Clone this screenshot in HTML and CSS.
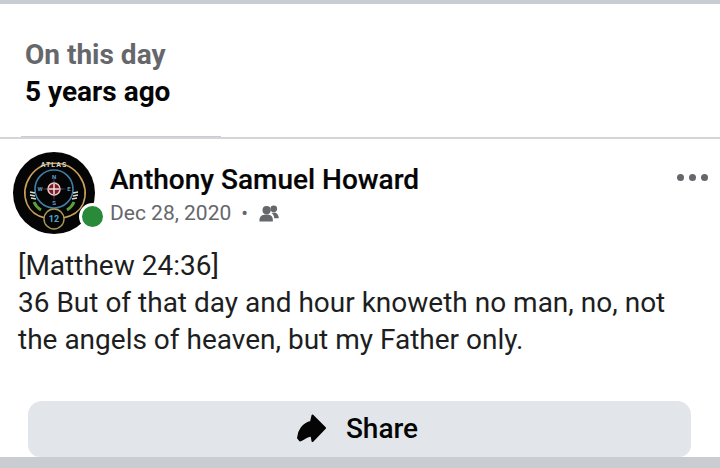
FILE: index.html
```html
<!DOCTYPE html>
<html lang="en">
<head>
  <meta charset="UTF-8">
  <meta name="viewport" content="width=device-width, initial-scale=1.0">
  <title>On this day</title>
  <link rel="stylesheet" href="styles.css">
</head>
<body>
  <div class="memory-header">
    <div class="memory-label">On this day</div>
    <div class="memory-years">5 years ago</div>
    <div class="memory-tab"></div>
  </div>

  <div class="post">
    <div class="post-top">
      <div class="avatar">
        <svg width="82" height="82" viewBox="0 0 82 82">
          <circle cx="41" cy="41" r="41" fill="#050505"/>
          <path d="M14 52A30 30 0 1 1 70 52" fill="none" stroke="#c9a05c" stroke-width="1.600"/>
          <path d="M14 52Q19 63 32 66M70 52Q65 63 50 66" fill="none" stroke="#c9a05c" stroke-width="1.600"/>
          <circle cx="41" cy="37" r="19" fill="#050505" stroke="#3f7fa6" stroke-width="1.600"/>
          <path d="M17 40L22 41M17 43L22 44M18 46L23 47M65 40L60 41M65 43L60 44M64 46L59 47" stroke="#d8dcd0" stroke-width="1.500"/>
          <path d="M21 50Q23 55 28 58M61 50Q59 55 54 58" fill="none" stroke="#5f9e3a" stroke-width="3"/>
          <path d="M41 24L43 35L54 37L43 39L41 50L39 39L28 37L39 35Z" fill="#3a2a30"/>
          <circle cx="41" cy="37" r="6" fill="#7a1a24" stroke="#e8c8c8" stroke-width="1.500"/>
          <path d="M36 37H46M41 32V42" stroke="#f0e0e0" stroke-width="1.500"/>
          <circle cx="41" cy="67" r="10" fill="#050505" stroke="#a89a58" stroke-width="1.400"/>
          <text class="avatar-num" x="41" y="70" text-anchor="middle">12</text>
          <text class="avatar-title" x="41" y="15" text-anchor="middle">ATLAS</text>
          <text class="avatar-dir" x="41" y="27" text-anchor="middle">N</text>
          <text class="avatar-dir" x="41" y="53" text-anchor="middle">S</text>
          <text class="avatar-dir" x="27" y="39" text-anchor="middle">W</text>
          <text class="avatar-dir" x="56" y="39" text-anchor="middle">E</text>
        </svg>
        <span class="online-dot"></span>
      </div>
      <div class="post-meta">
        <div class="post-author">Anthony Samuel Howard</div>
        <div class="post-date">
          <span>Dec 28, 2020</span>
          <span class="sep">•</span>
          <svg width="20" height="18" viewBox="0 0 21 18" fill="#65676b">
            <circle cx="8" cy="6" r="4.300"/>
            <circle cx="15.500" cy="4.500" r="3.500"/>
            <path d="M0.500 17.800C0 12.500 3 10.500 8 10.500C13 10.500 15 13 14.500 17.800Z"/>
            <path d="M13 9C16 7.500 20.500 8.500 20.800 14.500H16C15.800 12 15 10.500 13 9Z"/>
          </svg>
        </div>
      </div>
      <div class="post-more"><i></i><i></i><i></i></div>
    </div>

    <div class="post-text">[Matthew 24:36]<br>36 But of that day and hour knoweth no man, no, not<br>the angels of heaven, but my Father only.</div>

    <div class="share-wrap">
      <button class="share-btn">
        <svg width="30" height="29" viewBox="0 0 30 29" fill="#050505" stroke="#050505" stroke-width="2" stroke-linejoin="round">
          <path d="M15.500 1.500L28 14L15.500 27L14.500 21.500C10 21.500 6 26 3 26.500L1 24C1.500 17 6 9.500 14 8Z"/>
        </svg>
        <span>Share</span>
      </button>
    </div>
  </div>

  <div class="footer-bar"></div>
</body>
</html>
```

FILE: styles.css
```css
html, body {
  height: 100%;
}

body {
  margin: 0;
  font-family: Roboto, "Liberation Sans", sans-serif;
  color: #050505;
  background-color: #fff;
  display: flex;
  flex-direction: column;
  overflow: hidden;
}

/* memory header */
.memory-header {
  position: relative;
  height: 140px;
  padding: 33px 25px 0;
  box-sizing: border-box;
  border-top: 4px solid #c9ccd1;
  border-bottom: 2px solid #d3d5d8;
}

.memory-label {
  font-size: 28px;
  line-height: 36px;
  font-weight: 700;
  color: #65676b;
}

.memory-years {
  font-size: 28px;
  line-height: 36px;
  font-weight: 700;
  margin-top: 1px;
}

.memory-tab {
  position: absolute;
  left: 21px;
  bottom: 0;
  width: 200px;
  height: 1px;
  background-color: #c9ccd1;
}

/* post */
.post {
  flex: 1;
}

.post-top {
  display: flex;
  padding: 13px 12px 0 13px;
}

.avatar {
  position: relative;
  width: 82px;
  height: 82px;
  flex-shrink: 0;
}

.avatar svg {
  display: block;
}

.avatar-title {
  font: 700 7px Roboto, sans-serif;
  letter-spacing: 1px;
  fill: #d8d8c8;
}

.avatar-num {
  font: 700 9px Roboto, sans-serif;
  fill: #4fa8c8;
}

.avatar-dir {
  font: 700 6px Roboto, sans-serif;
  fill: #5a9fc8;
}

.online-dot {
  position: absolute;
  left: 66px;
  top: 51px;
  width: 21px;
  height: 21px;
  border: 3px solid #fff;
  border-radius: 50%;
  background-color: #298a3a;
}

.post-meta {
  flex: 1;
  margin-left: 15px;
  padding-top: 11px;
}

.post-author {
  font-size: 28px;
  line-height: 34px;
  font-weight: 500;
  -webkit-text-stroke: 0.2px #050505;
}

.post-date {
  display: flex;
  align-items: center;
  margin-top: 4px;
  font-size: 21px;
  line-height: 24px;
  color: #65676b;
}

.post-date .sep {
  margin: 0 11px 0 10px;
  font-size: 20px;
}

.post-more {
  display: flex;
  gap: 5px;
  padding-top: 22px;
}

.post-more i {
  width: 7px;
  height: 7px;
  border-radius: 50%;
  background-color: #65676b;
}

.post-text {
  margin-top: 13px;
  padding: 0 18px;
  font-size: 28px;
  line-height: 37px;
  color: #1c1e21;
}

.share-wrap {
  padding: 0 28px;
  margin-top: 43px;
}

.share-btn {
  display: flex;
  align-items: center;
  justify-content: center;
  gap: 19px;
  width: 663px;
  height: 56px;
  padding: 0 4px 1px 0;
  border: none;
  border-radius: 14px 14px 12px 12px;
  background-color: #e2e5e9;
  font-family: inherit;
  font-size: 28px;
  font-weight: 500;
  color: #050505;
}

.footer-bar {
  height: 11px;
  flex-shrink: 0;
  background-color: #c9ccd1;
}
```
